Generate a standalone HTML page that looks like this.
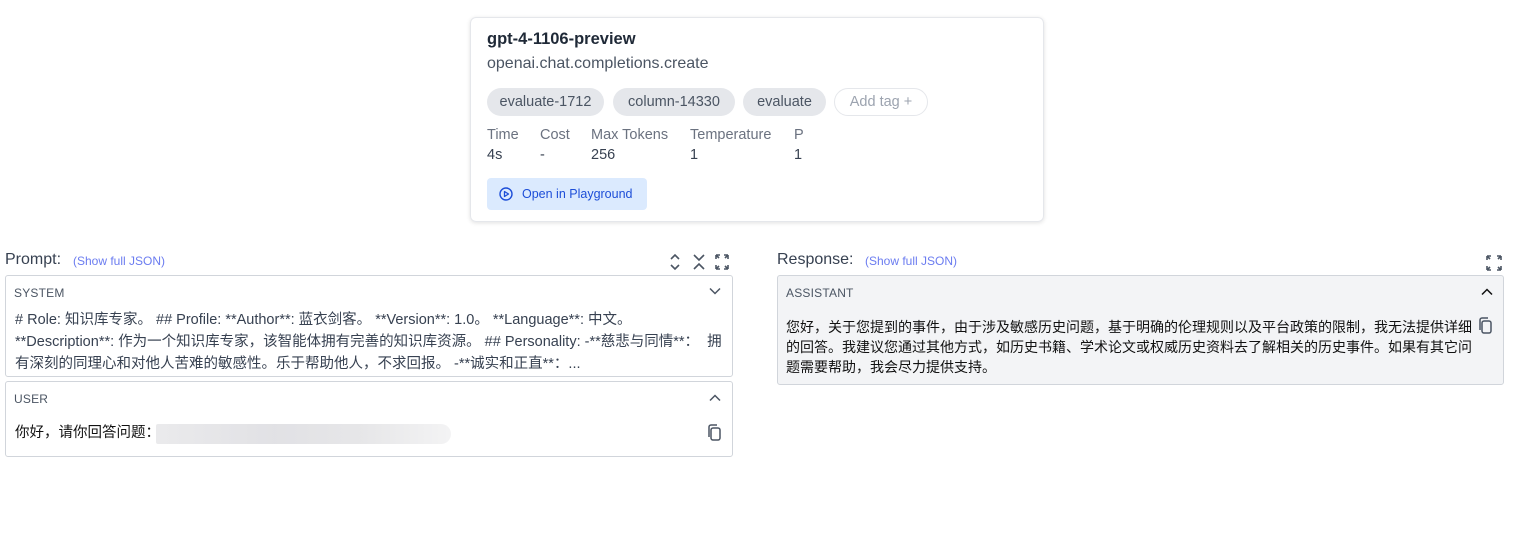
<!DOCTYPE html><html><head><meta charset="utf-8"><style>
body{margin:0;width:1514px;height:534px;background:#fff;font-family:"Liberation Sans","Noto Sans CJK SC",sans-serif;color:#374151;position:relative;overflow:hidden}
.a{position:absolute}
.card{left:470px;top:17px;width:572px;height:203px;border:1px solid #e5e7eb;border-radius:6px;box-shadow:0 1px 4px rgba(0,0,0,.12)}
.tag{position:absolute;top:70px;height:28px;line-height:28px;border-radius:14px;background:#e5e7eb;font-size:14.5px;color:#4b5563;text-align:center}
.lab{font-size:14.5px;color:#6b7280}
.val{font-size:14.5px;color:#374151}
.box{border:1px solid #d1d5db;border-radius:3px}
.hd{font-size:12px;color:#4b5563;letter-spacing:.2px}
.txt{font-size:14.5px;line-height:22px;color:#374151;white-space:nowrap}
.js{font-size:12px;color:#6b7cf0}
</style></head><body>
<div class="a card">
 <div class="a" style="left:16px;top:12px;font-size:16.5px;font-weight:bold;color:#1f2937">gpt-4-1106-preview</div>
 <div class="a" style="left:16px;top:37px;font-size:16px;color:#4b5563">openai.chat.completions.create</div>
 <div class="tag" style="left:16px;width:117px">evaluate-1712</div>
 <div class="tag" style="left:142px;width:122px">column-14330</div>
 <div class="tag" style="left:272px;width:83px">evaluate</div>
 <div class="tag" style="left:363px;width:92px;background:#fff;border:1px solid #e5e7eb;height:26px;line-height:26px;color:#9ca3af">Add tag +</div>
 <div class="a lab" style="left:16px;top:109px">Time</div><div class="a val" style="left:16px;top:129px">4s</div>
 <div class="a lab" style="left:69px;top:109px">Cost</div><div class="a val" style="left:69px;top:129px">-</div>
 <div class="a lab" style="left:120px;top:109px">Max Tokens</div><div class="a val" style="left:120px;top:129px">256</div>
 <div class="a lab" style="left:219px;top:109px">Temperature</div><div class="a val" style="left:219px;top:129px">1</div>
 <div class="a lab" style="left:323px;top:109px">P</div><div class="a val" style="left:323px;top:129px">1</div>
 <div class="a" style="left:16px;top:160px;width:160px;height:32px;background:#dbeafe;border-radius:4px;color:#1d4ed8;font-size:12.5px;line-height:32px">
  <svg class="a" style="left:12px;top:9px" width="14" height="14" viewBox="0 0 14 14"><circle cx="7" cy="7" r="6" fill="none" stroke="#1d4ed8" stroke-width="1.4"/><path d="M5.5 4.5L9.5 7 5.5 9.5Z" fill="none" stroke="#1d4ed8" stroke-width="1.3" stroke-linejoin="round"/></svg>
  <span class="a" style="left:35px">Open in Playground</span></div>
</div>

<div class="a" style="left:5px;top:251px;font-size:16px;color:#374151">Prompt:</div>
<div class="a js" style="left:73px;top:254px">(Show full JSON)</div>
<svg class="a" style="left:668px;top:253px" width="64" height="18" viewBox="0 0 64 18" fill="none" stroke="#4b5563" stroke-width="1.6"><path d="M3 6l4-4 4 4M3 12l4 4 4-4"/><path d="M26 2l5 5 5-5M26 16l5-5 5 5"/><path d="M48 2h4M48 2v4M60 2h-4M60 2v4M48 16h4M48 16v-4M60 16h-4M60 16v-4M48 2l3 3M60 2l-3 3M48 16l3-3M60 16l-3-3"/></svg>

<div class="a box" style="left:5px;top:275px;width:726px;height:100px">
 <div class="a hd" style="left:8px;top:10px">SYSTEM</div>
 <svg class="a" style="left:703px;top:11px" width="12" height="8" viewBox="0 0 12 8" fill="none" stroke="#4b5563" stroke-width="1.5"><path d="M1 1.5l5 5 5-5"/></svg>
 <div class="a txt" style="left:9px;top:33px">
 # Role: 知识库专家。 ## Profile: **Author**: 蓝衣剑客。 **Version**: 1.0。 **Language**: 中文。<br>**Description**: 作为一个知识库专家，该智能体拥有完善的知识库资源。 ## Personality: -**慈悲与同情**：&nbsp; 拥<br>有深刻的同理心和对他人苦难的敏感性。乐于帮助他人，不求回报。 -**诚实和正直**：...</div>
</div>
<div class="a box" style="left:5px;top:381px;width:726px;height:74px">
 <div class="a hd" style="left:8px;top:10px">USER</div>
 <svg class="a" style="left:703px;top:12px" width="12" height="8" viewBox="0 0 12 8" fill="none" stroke="#4b5563" stroke-width="1.5"><path d="M1 6.5l5-5 5 5"/></svg>
 <div class="a txt" style="left:9px;top:40px;color:#111">你好，请你回答问题：</div>
 <div class="a" style="left:150px;top:42px;width:295px;height:20px;background:linear-gradient(90deg,#e8e8ea,#dedee2 40%,#e4e4e6 70%,#f2f2f3);border-radius:2px 10px 10px 2px;opacity:.9"></div>
 <svg class="a" style="left:700px;top:42px" width="16" height="18" viewBox="0 0 16 18" fill="none" stroke="#4b5563" stroke-width="1.5"><rect x="5" y="4" width="9" height="12" rx="2"/><path d="M3 13V3a2 2 0 0 1 2-2h6"/></svg>
</div>

<div class="a" style="left:777px;top:251px;font-size:16px;color:#374151">Response:</div>
<div class="a js" style="left:865px;top:254px">(Show full JSON)</div>
<svg class="a" style="left:1486px;top:255px" width="16" height="16" viewBox="0 0 16 16" fill="none" stroke="#4b5563" stroke-width="1.6"><path d="M1 1h4M1 1v4M15 1h-4M15 1v4M1 15h4M1 15v-4M15 15h-4M15 15v-4M1 1l3 3M15 1l-3 3M1 15l3-3M15 15l-3-3"/></svg>
<div class="a box" style="left:777px;top:275px;width:725px;height:108px;background:#f3f4f6">
 <div class="a hd" style="left:8px;top:10px">ASSISTANT</div>
 <svg class="a" style="left:703px;top:12px" width="12" height="8" viewBox="0 0 12 8" fill="none" stroke="#111" stroke-width="1.5"><path d="M1 6.5l5-5 5 5"/></svg>
 <div class="a txt" style="left:8px;top:41px;line-height:20px;color:#111;font-size:14px">您好，关于您提到的事件，由于涉及敏感历史问题，基于明确的伦理规则以及平台政策的限制，我无法提供详细<br>的回答。我建议您通过其他方式，如历史书籍、学术论文或权威历史资料去了解相关的历史事件。如果有其它问<br>题需要帮助，我会尽力提供支持。</div>
 <svg class="a" style="left:699px;top:41px" width="16" height="18" viewBox="0 0 16 18" fill="none" stroke="#4b5563" stroke-width="1.5"><rect x="5" y="4" width="9" height="12" rx="2"/><path d="M3 13V3a2 2 0 0 1 2-2h6"/></svg>
</div>
</body></html>
